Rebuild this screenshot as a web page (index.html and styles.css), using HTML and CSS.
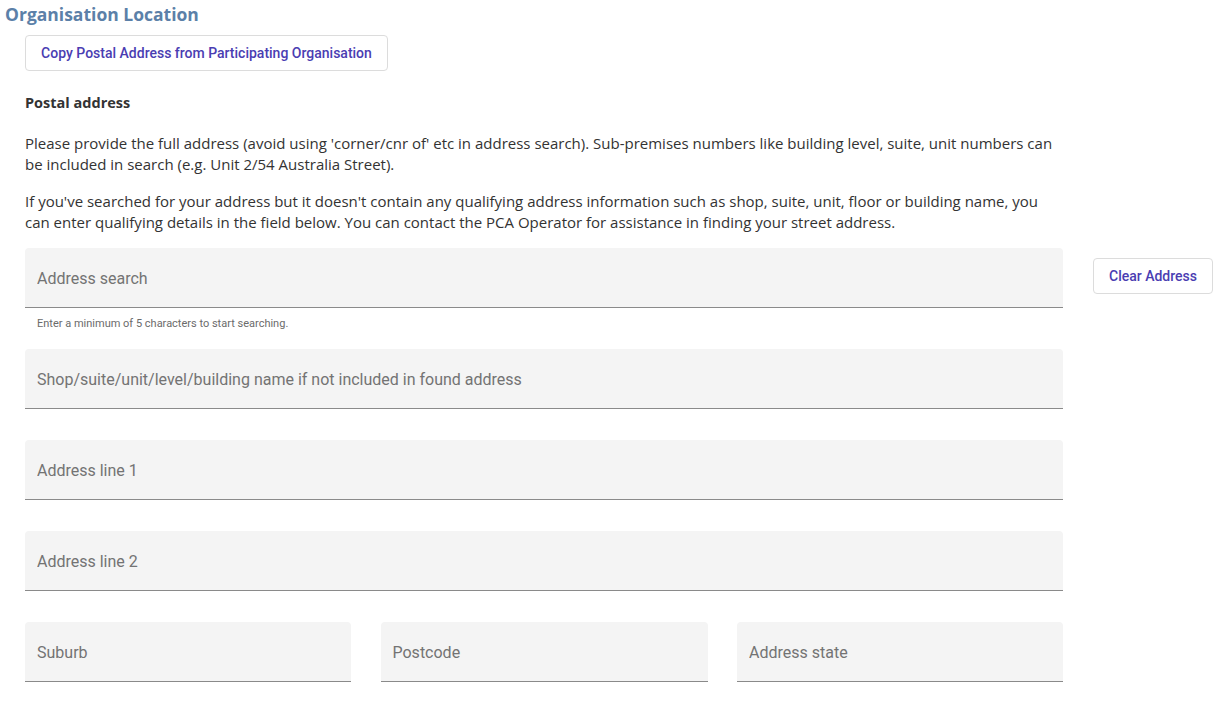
FILE: index.html
```html
<!DOCTYPE html>
<html lang="en">

<head>
    <meta charset="UTF-8">
    <meta name="viewport" content="width=device-width, initial-scale=1.0">
    <title>Organisation Location</title>
    <link rel="stylesheet" href="styles.css">
</head>

<body>
    <h2 class="section-title">Organisation Location</h2>

    <div class="section">
        <button class="btn copy-btn" type="button">Copy Postal Address from Participating Organisation</button>

        <h3 class="sub-title">Postal address</h3>

        <p class="info">Please provide the full address (avoid using 'corner/cnr of' etc in address search). Sub-premises numbers like building level, suite, unit numbers can be included in search (e.g. Unit 2/54 Australia Street).</p>
        <p class="info info-narrow">If you've searched for your address but it doesn't contain any qualifying address information such as shop, suite, unit, floor or building name, you can enter qualifying details in the field below. You can contact the PCA Operator for assistance in finding your street address.</p>

        <div class="address-row">
            <div class="fields">
                <div class="field">
                    <input type="text" placeholder="Address search">
                </div>
                <div class="hint">Enter a minimum of 5 characters to start searching.</div>

                <div class="field">
                    <input type="text" placeholder="Shop/suite/unit/level/building name if not included in found address">
                </div>
                <div class="field">
                    <input type="text" placeholder="Address line 1">
                </div>
                <div class="field">
                    <input type="text" placeholder="Address line 2">
                </div>

                <div class="field-row">
                    <div class="field">
                        <input type="text" placeholder="Suburb">
                    </div>
                    <div class="field">
                        <input type="text" placeholder="Postcode">
                    </div>
                    <div class="field">
                        <input type="text" placeholder="Address state">
                    </div>
                </div>
            </div>

            <div class="side">
                <button class="btn clear-btn" type="button">Clear Address</button>
            </div>
        </div>
    </div>
</body>

</html>
```

FILE: styles.css
```css
body {
    margin: 0;
    padding: 0;
    background-color: #ffffff;
    font-family: "Open Sans", "Noto Sans", sans-serif;
    color: #333333;
}

.section-title {
    margin: 0;
    padding: 2px 5px 0 5px;
    font-family: "Open Sans", sans-serif;
    font-size: 17.5px;
    font-weight: 700;
    line-height: 24px;
    color: #5b80a8;
}

.section {
    padding: 9px 0 0 25px;
}

.btn {
    height: 36px;
    padding: 0;
    background-color: #ffffff;
    border: 1px solid #dcdcdc;
    border-radius: 4px;
    font-family: Roboto, sans-serif;
    font-size: 14px;
    font-weight: 500;
    color: #4a3db2;
    cursor: pointer;
}

.copy-btn {
    width: 363px;
}

.clear-btn {
    width: 120px;
}

.sub-title {
    margin: 22px 0 0 0;
    font-size: 14.5px;
    font-weight: 700;
    line-height: 20px;
    color: #333333;
}

.info {
    margin: 20px 0 0 0;
    width: 1040px;
    font-size: 15px;
    line-height: 21px;
    color: #333333;
}

.info + .info {
    margin-top: 16px;
}

.info-narrow {
    width: 1020px;
}

.address-row {
    display: flex;
    margin-top: 15px;
}

.fields {
    width: 1038px;
}

.side {
    padding: 10px 0 0 30px;
}

.field {
    height: 59px;
    margin-bottom: 31px;
    background-color: #f4f4f4;
    border-bottom: 1px solid #8a8a8a;
    border-radius: 4px 4px 0 0;
}

.field input {
    box-sizing: border-box;
    width: 100%;
    height: 100%;
    padding: 2px 12px 0 12px;
    border: none;
    outline: none;
    background: transparent;
    font-family: Roboto, sans-serif;
    font-size: 16px;
    color: #333333;
}

.field input::placeholder {
    color: #737373;
}

.hint {
    margin: -22px 0 18px 12px;
    font-family: Roboto, sans-serif;
    font-size: 11px;
    line-height: 14px;
    color: #6b6b6b;
}

.field-row {
    display: grid;
    grid-template-columns: 326px 327px 326px;
    justify-content: space-between;
}
```
